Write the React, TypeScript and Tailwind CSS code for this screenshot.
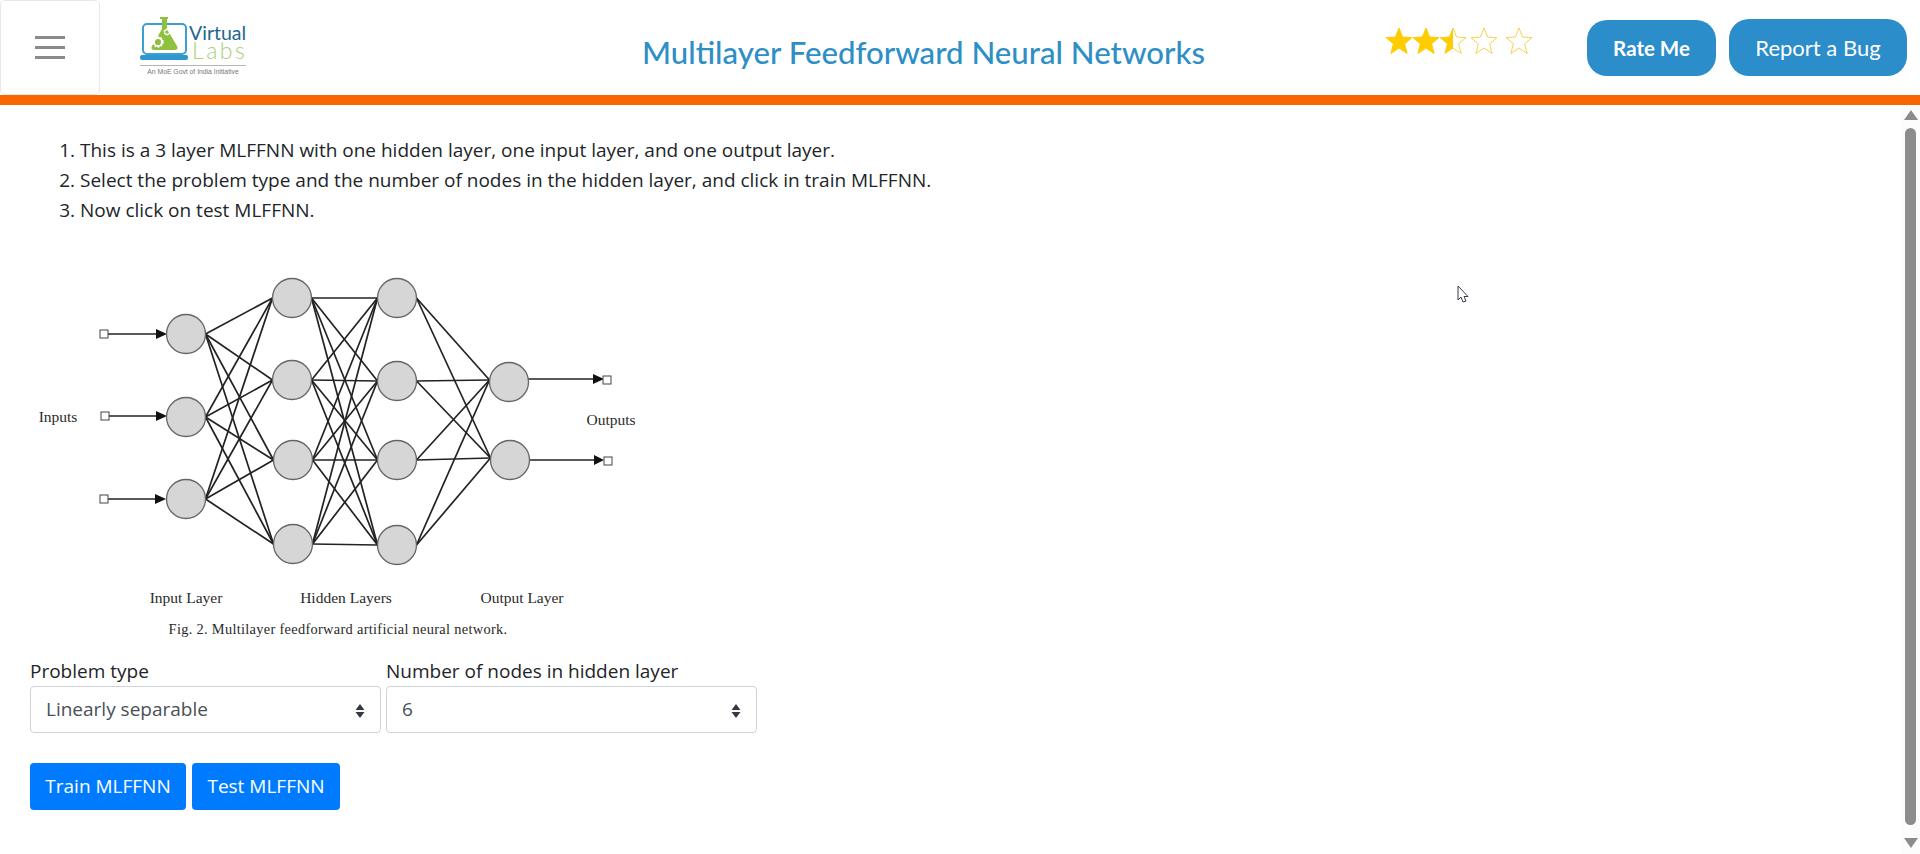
const inputs = [
  [186, 334],
  [186, 417],
  [186, 499],
];
const hiddenA = [
  [292, 298],
  [292, 380],
  [293, 460],
  [293, 544],
];
const hiddenB = [
  [397, 298],
  [397, 381],
  [397, 460],
  [397, 545],
];
const outputs = [
  [509, 382],
  [510, 460],
];
const R = 19.5;

function links(from: number[][], to: number[][]) {
  return from.flatMap(([x1, y1]) =>
    to.map(([x2, y2]) => (
      <line
        key={`${x1}-${y1}-${x2}-${y2}`}
        x1={x1 + R}
        y1={y1}
        x2={x2 - R}
        y2={y2}
      />
    ))
  );
}

function NetworkDiagram() {
  const nodes = [...inputs, ...hiddenA, ...hiddenB, ...outputs];
  return (
    <svg
      viewBox="30 240 620 416"
      className="block w-[620px] h-[416px]"
      style={{ fontFamily: '"Liberation Serif", serif' }}
    >
      <g stroke="#222" strokeWidth="1.7">
        {links(inputs, hiddenA)}
        {links(hiddenA, hiddenB)}
        {links(hiddenB, outputs.map(([x, y]) => [x, y - 2]))}
        <line x1="108" y1="334" x2="160" y2="334" />
        <line x1="109" y1="416" x2="160" y2="416" />
        <line x1="108" y1="499" x2="160" y2="499" />
        <line x1="528" y1="379" x2="598" y2="379" />
        <line x1="530" y1="460" x2="598" y2="460" />
      </g>
      <g fill="#111">
        <polygon points="156,329 167,334 156,339" />
        <polygon points="156,411 167,416 156,421" />
        <polygon points="155,494 166,499 155,504" />
        <polygon points="593,374 604,379 593,384" />
        <polygon points="594,455 604,460 594,465" />
      </g>
      <g fill="#fff" stroke="#444" strokeWidth="1">
        <rect x="100" y="330" width="8" height="8" />
        <rect x="101" y="412" width="8" height="8" />
        <rect x="100" y="495" width="8" height="8" />
        <rect x="603" y="376" width="8" height="8" />
        <rect x="604" y="457" width="8" height="8" />
      </g>
      {nodes.map(([cx, cy]) => (
        <circle
          key={`${cx}-${cy}`}
          cx={cx}
          cy={cy}
          r={R}
          fill="#d6d6d6"
          stroke="#666"
          strokeWidth="1.3"
        />
      ))}
      <g fill="#2a2a2a" fontSize="15.5" textAnchor="middle">
        <text x="58" y="422">Inputs</text>
        <text x="611" y="425">Outputs</text>
        <text x="186" y="603">Input Layer</text>
        <text x="346" y="603">Hidden Layers</text>
        <text x="522" y="603">Output Layer</text>
        <text x="338" y="634" fontSize="14.4" letterSpacing="0.3">
          Fig. 2. Multilayer feedforward artificial neural network.
        </text>
      </g>
    </svg>
  );
}

function Gear({ x, y, r }: { x: number; y: number; r: number }) {
  return (
    <g>
      <circle
        cx={x}
        cy={y}
        r={r}
        fill="none"
        stroke="#fff"
        strokeWidth={r * 0.45}
      />
      <circle
        cx={x}
        cy={y}
        r={r * 1.25}
        fill="none"
        stroke="#fff"
        strokeWidth={r * 0.4}
        strokeDasharray="1.6 1.6"
      />
    </g>
  );
}

function Logo() {
  return (
    <svg viewBox="0 0 110 62" className="block w-[110px] h-[62px]">
      <rect
        x="3"
        y="7"
        width="43"
        height="30"
        rx="4"
        fill="none"
        stroke="#3b9fd2"
        strokeWidth="2"
      />
      <rect x="0" y="38" width="48" height="5" rx="2" fill="#2f97cf" />
      <path
        d="M20 0h8v2h-1v10l10 17q2 4-3 4H15q-5 0-3-4l10-17V2h-2z"
        fill="#8fc13e"
      />
      <Gear x={18} y={25} r={4} />
      <Gear x={27} y={15} r={2.4} />
      <text
        x="49"
        y="23"
        fontSize="19.5"
        fill="#21678f"
        fontFamily="Lato, sans-serif"
      >
        Virtual
      </text>
      <text
        x="52"
        y="42"
        fontSize="23"
        fontWeight="300"
        fill="#a9d07a"
        fontFamily="Lato, sans-serif"
        letterSpacing="2.5"
      >
        Labs
      </text>
      <line x1="0" y1="48.5" x2="106" y2="48.5" stroke="#b5b5b5" />
      <text
        x="53"
        y="57"
        fontSize="6.8"
        fill="#777"
        textAnchor="middle"
        fontFamily='"Liberation Sans", sans-serif'
      >
        An MoE Govt of India Initiative
      </text>
    </svg>
  );
}

const STAR = "14,1 17.6,10 27,10.6 19.6,16.8 22.1,26.5 14,21 5.9,26.5 8.4,16.8 1,10.6 10.4,10";
const HALF = "14,1 10.4,10 1,10.6 8.4,16.8 5.9,26.5 14,21";

function Star({ kind, className }: { kind: "full" | "half" | "empty"; className: string }) {
  return (
    <svg viewBox="0 0 28 28" className={className}>
      <polygon
        points={STAR}
        fill={kind === "full" ? "#ffcc00" : "none"}
        stroke={kind === "full" ? "#ffcc00" : "#f5d24f"}
        strokeWidth="1"
      />
      {kind === "half" && <polygon points={HALF} fill="#ffcc00" />}
    </svg>
  );
}

function Select({ label, value, options, className }: {
  label: string;
  value: string;
  options: string[];
  className: string;
}) {
  return (
    <div className={className}>
      <label className="block h-[30px] leading-[30px]">{label}</label>
      <div className="relative">
        <select
          defaultValue={value}
          className="block w-full h-[47px] appearance-none rounded-[4px] border border-[#ced4da] bg-white pl-[15px] text-[#495057] outline-none"
        >
          {options.map((o) => (
            <option key={o}>{o}</option>
          ))}
        </select>
        <svg
          viewBox="0 0 10 14"
          className="absolute right-[16px] top-[18px] w-[10px] h-[14px]"
        >
          <path d="M5 0 9.500 6H.5zM5 14 .5 8h9z" fill="#343a40" />
        </svg>
      </div>
    </div>
  );
}

function Scrollbar() {
  return (
    <div className="flex w-[19px] shrink-0 flex-col items-center bg-[#fcfcfc] pt-[5px] pb-[6px]">
      <svg viewBox="0 0 14 10" className="w-[14px] h-[10px] shrink-0">
        <polygon points="7,0 14,10 0,10" fill="#8c8c8c" />
      </svg>
      <div className="mt-[8px] mb-[13px] w-[11px] flex-1 rounded-full bg-[#8c8c8c]" />
      <svg viewBox="0 0 14 10" className="w-[14px] h-[10px] shrink-0">
        <polygon points="0,0 14,0 7,10" fill="#8c8c8c" />
      </svg>
    </div>
  );
}

export default function App() {
  return (
    <div
      className="relative flex h-[854px] w-[1920px] flex-col overflow-hidden bg-white text-[#212529] text-[19px]"
      style={{ fontFamily: '"Open Sans", sans-serif' }}
    >
      <header className="flex h-[95px] shrink-0 items-start">
        <button className="flex h-[95px] w-[100px] shrink-0 flex-col items-center justify-center gap-[7px] rounded-[5px] border border-[#e8e8e8] bg-white">
          <span className="block h-[3px] w-[30px] bg-[#8a8a8a]" />
          <span className="block h-[3px] w-[30px] bg-[#8a8a8a]" />
          <span className="block h-[3px] w-[30px] bg-[#8a8a8a]" />
        </button>
        <div className="ml-[40px] mt-[17px] shrink-0">
          <Logo />
        </div>
        <h1
          className="ml-[392px] mt-[32px] w-[562px] shrink-0 whitespace-nowrap text-center text-[31.2px] leading-[40px] font-medium text-[#2e8fc6]"
          style={{ fontFamily: "Lato, sans-serif" }}
        >
          Multilayer Feedforward Neural Networks
        </h1>
        <div className="ml-[181px] mt-[27px] flex shrink-0">
          <Star kind="full" className="h-[28px] w-[28px]" />
          <Star kind="full" className="-ml-[1px] h-[28px] w-[28px]" />
          <Star kind="half" className="-ml-[1px] h-[28px] w-[28px]" />
          <Star kind="empty" className="ml-[3px] h-[28px] w-[28px]" />
          <Star kind="empty" className="ml-[7px] h-[28px] w-[28px]" />
        </div>
        <div
          className="ml-[54px] mt-[19px] flex shrink-0 items-start gap-[13px] text-white"
          style={{ fontFamily: "Lato, sans-serif" }}
        >
          <button className="mt-[1px] h-[56px] w-[129px] rounded-[20px] bg-[#2b8dca] text-[20.5px] font-bold">
            Rate Me
          </button>
          <button className="h-[57px] w-[178px] rounded-[20px] bg-[#2b8dca] text-[22px]">
            Report a Bug
          </button>
        </div>
      </header>
      <div className="h-[10px] shrink-0 bg-[#f96500]" />
      <div className="flex min-h-0 flex-1">
        <main className="min-w-0 flex-1 pl-[30px] pt-[30px]">
          <ol className="list-decimal pl-[50px] leading-[30px]">
            <li>This is a 3 layer MLFFNN with one hidden layer, one input layer, and one output layer.</li>
            <li>Select the problem type and the number of nodes in the hidden layer, and click in train MLFFNN.</li>
            <li>Now click on test MLFFNN.</li>
          </ol>
          <div className="mt-[15px]">
            <NetworkDiagram />
          </div>
          <div className="flex">
            <Select
              label="Problem type"
              value="Linearly separable"
              options={["Linearly separable", "Non-linearly separable"]}
              className="w-[351px]"
            />
            <Select
              label="Number of nodes in hidden layer"
              value="6"
              options={["2", "4", "6", "8"]}
              className="ml-[5px] w-[371px]"
            />
          </div>
          <div className="mt-[30px] flex gap-[6px]">
            <button className="h-[47px] w-[156px] rounded-[4px] bg-[#007bff] text-white">
              Train MLFFNN
            </button>
            <button className="h-[47px] w-[148px] rounded-[4px] bg-[#007bff] text-white">
              Test MLFFNN
            </button>
          </div>
        </main>
        <Scrollbar />
      </div>
      <svg
        viewBox="0 0 12 20"
        className="absolute left-[1457px] top-[285px] h-[20px] w-[12px]"
      >
        <path
          d="M1 1v14l3-3 2 5 3-1-2-4.500h4z"
          fill="#fff"
          stroke="#3a3a4a"
          strokeWidth="1"
        />
      </svg>
    </div>
  );
}
